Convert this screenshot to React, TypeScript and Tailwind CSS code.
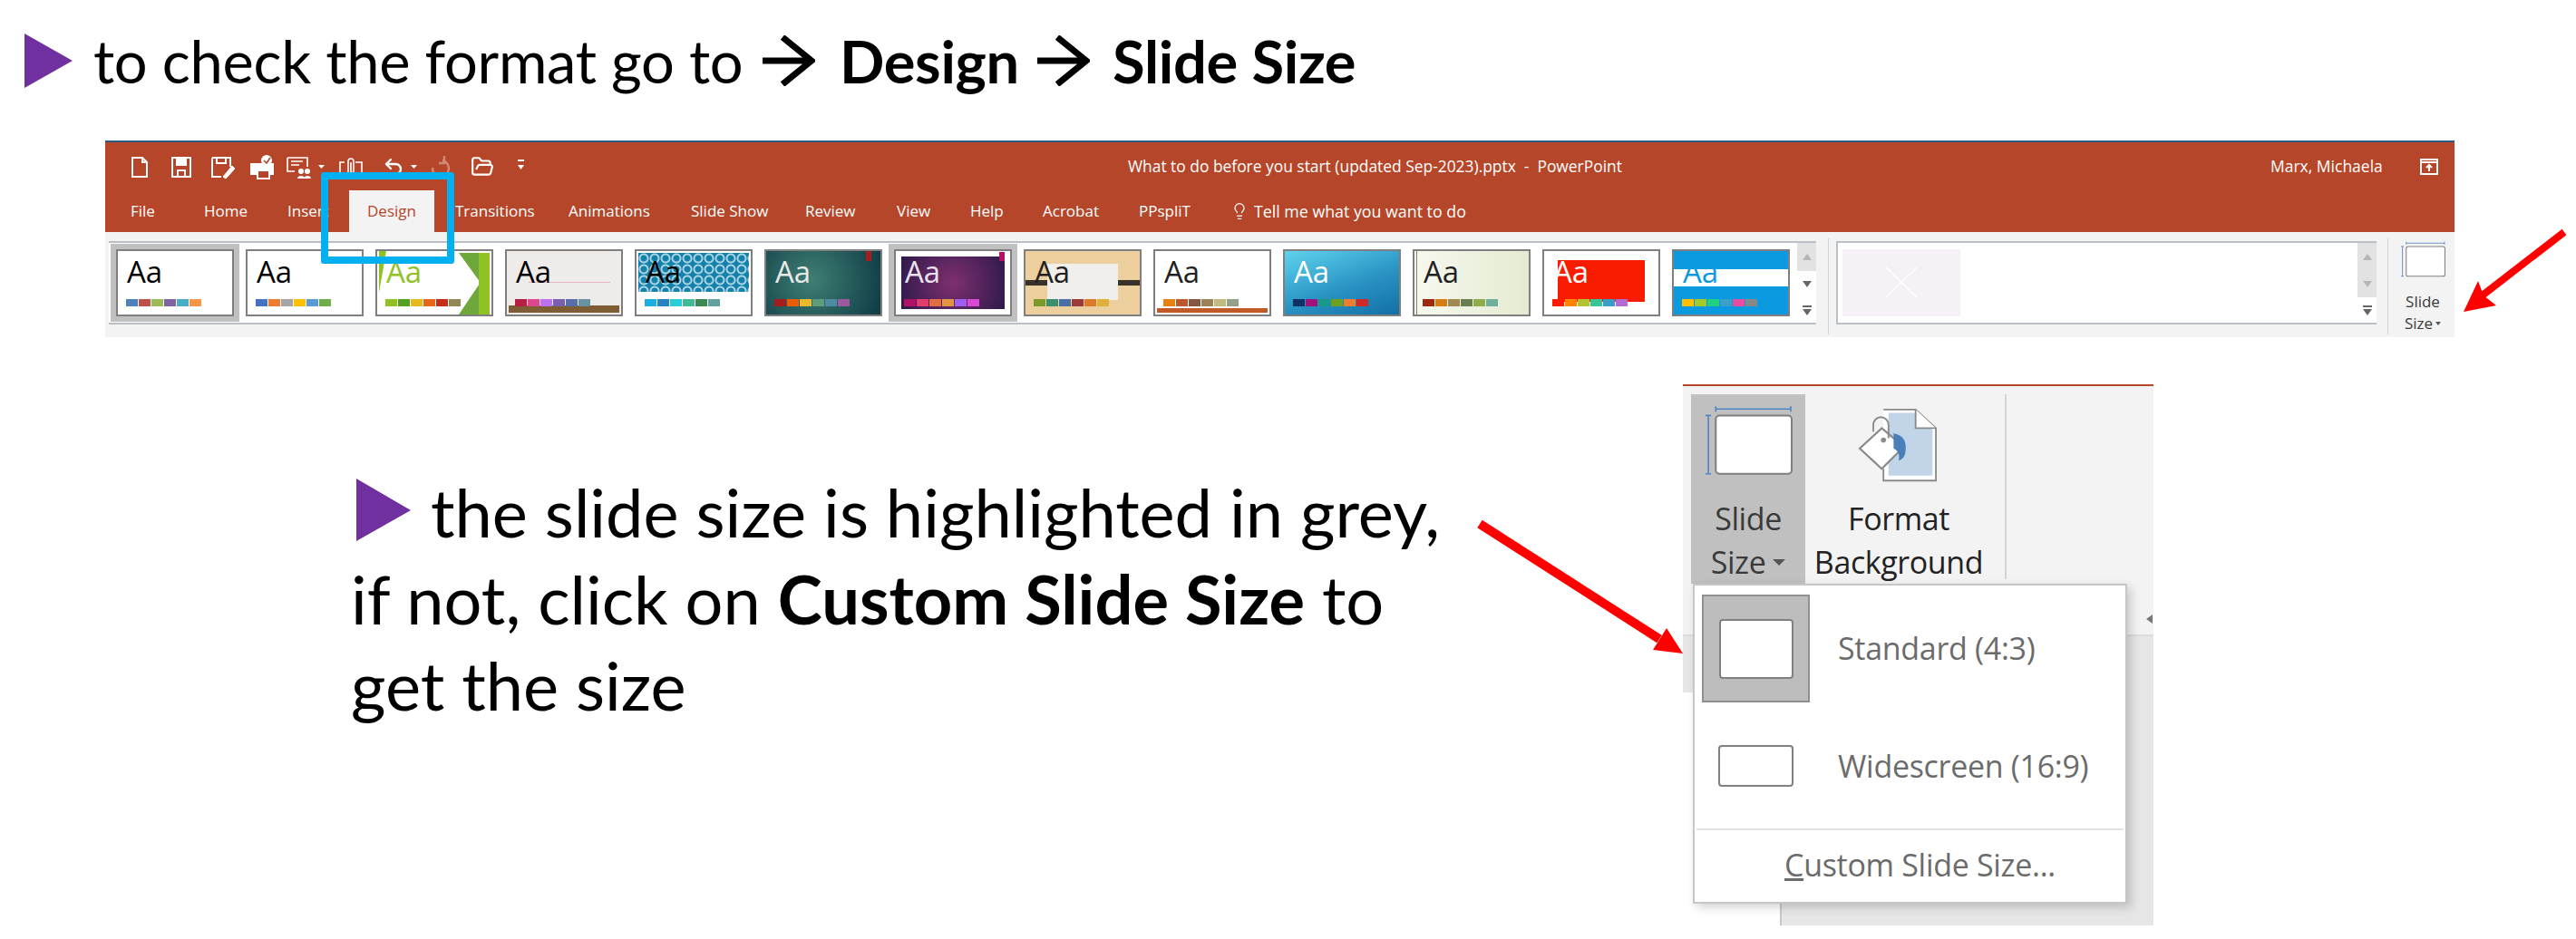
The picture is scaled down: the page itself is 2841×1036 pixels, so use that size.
import React from 'react';
import { FolderOpen, Lightbulb, Undo2 } from 'lucide-react';

type Theme = {
  id: string;
  bg: string;
  text: string;
  aa: string;
  swatches: string[];
  selected?: boolean;
  extra?: React.ReactNode;
};

const themes: Theme[] = [
  { id: 'office', bg: 'bg-white', text: 'text-black', aa: 'Aa', selected: true, swatches: ['#4f81bd', '#c0504d', '#9bbb59', '#8064a2', '#4bacc6', '#f79646'] },
  { id: 'office2', bg: 'bg-white', text: 'text-black', aa: 'Aa', swatches: ['#4472c4', '#ed7d31', '#a5a5a5', '#ffc000', '#5b9bd5', '#70ad47'] },
  {
    id: 'facet', bg: 'bg-white', text: 'text-[#90c226]', aa: 'Aa', swatches: ['#90c226', '#54a021', '#e6b91e', '#e76618', '#c42f1a', '#918655'],
    extra: (
      <>
        <div className="absolute left-[2px] top-0 w-[8px] h-[46px] bg-[#90c226] [clip-path:polygon(0_0,100%_0,0_100%)]" />
        <div className="absolute right-[2px] top-[2px] w-[34px] h-[68px] bg-[#6fa83a] [clip-path:polygon(0_0,100%_0,100%_100%,0_100%,70%_48%)]" />
        <div className="absolute right-[2px] top-[2px] w-[12px] h-[68px] bg-[#90c226]" />
      </>
    ),
  },
  {
    id: 'wood', bg: 'bg-[#efebe9]', text: 'text-black', aa: 'Aa', swatches: ['#b71e42', '#de478e', '#bc72f0', '#795faf', '#586ea6', '#6892a0'],
    extra: (
      <>
        <div className="absolute left-[24px] right-[12px] top-[34px] h-[1px] bg-[#e6b4c4]" />
        <div className="absolute left-[2px] right-[2px] bottom-[2px] h-[8px] bg-[#7e5d34]" />
      </>
    ),
  },
  {
    id: 'pattern', bg: 'bg-white', text: 'text-black', aa: 'Aa', swatches: ['#1cade4', '#2683c6', '#27ced7', '#42ba97', '#3e8853', '#62a39f'],
    extra: <div className="absolute left-[2px] right-[2px] top-[2px] h-[43px] bg-[radial-gradient(circle,#1481ab_3px,#a9d3e3_4px,#a9d3e3_5px,#1481ab_6px)] bg-[length:12px_12px]" />,
  },
  {
    id: 'teal', bg: 'bg-[radial-gradient(circle_at_40%_45%,#3f7f74,#0e3a44)]', text: 'text-[#e8e8e8]', aa: 'Aa', swatches: ['#a61c1c', '#e85d04', '#e8b92e', '#5f9c7e', '#4f8ba0', '#9b59a0'],
    extra: <div className="absolute right-[10px] top-0 w-[6px] h-[11px] bg-[#a81c1c]" />,
  },
  {
    id: 'purple', bg: 'bg-white', text: 'text-[#e8e0ec]', aa: 'Aa', selected: true, swatches: ['#b31166', '#e33d6f', '#e46c42', '#e1963f', '#a15ff0', '#d94bd6'],
    extra: (
      <>
        <div className="absolute left-[6px] right-[6px] top-[6px] bottom-[6px] bg-[radial-gradient(circle_at_50%_50%,#7e2f70,#2e1a4a)]" />
        <div className="absolute right-[6px] top-[1px] w-[6px] h-[10px] bg-[#b31166]" />
      </>
    ),
  },
  {
    id: 'tan', bg: 'bg-[#eccf9c]', text: 'text-[#222222]', aa: 'Aa', swatches: ['#7c9a2a', '#3b8f6c', '#4a6fa5', '#9c3a3a', '#d97b2b', '#e0b13a'],
    extra: (
      <>
        <div className="absolute left-[24px] right-[24px] top-[14px] h-[40px] bg-[#f0efec]" />
        <div className="absolute left-0 w-[24px] top-[32px] h-[6px] bg-[#3a3228]" />
        <div className="absolute right-0 w-[24px] top-[32px] h-[6px] bg-[#3a3228]" />
      </>
    ),
  },
  {
    id: 'retro', bg: 'bg-white', text: 'text-[#222222]', aa: 'Aa', swatches: ['#e48312', '#bd582c', '#865640', '#9b8357', '#c2bc80', '#94a088'],
    extra: <div className="absolute left-[2px] right-[2px] bottom-[2px] h-[5px] bg-[#c05a28]" />,
  },
  {
    id: 'ion', bg: 'bg-[linear-gradient(160deg,#5fd3ee,#2a94c4_55%,#136fa4)]', text: 'text-white', aa: 'Aa', swatches: ['#0f3263', '#a1127f', '#1a9988', '#6e9f1e', '#ed7d31', '#d0282a'],
  },
  {
    id: 'sage', bg: 'bg-[linear-gradient(90deg,#f7f8ee,#e4ebd2)]', text: 'text-[#222222]', aa: 'Aa', swatches: ['#9c2a0e', '#d97c14', '#a08850', '#6b7f4e', '#8fae4a', '#6fb09a'],
    extra: <div className="absolute left-[2px] top-0 bottom-0 w-[1px] bg-[#80846a]" />,
  },
  {
    id: 'red', bg: 'bg-white', text: 'text-white', aa: 'Aa', swatches: ['#ff1a00', '#ff8400', '#b5c22f', '#38c494', '#3a9cc9', '#b46ad0'],
    extra: <div className="absolute left-[15px] right-[15px] top-[10px] bottom-[14px] bg-[#fa1c00]" />,
  },
  {
    id: 'band', bg: 'bg-[#0b9ae0]', text: 'text-[#0b9ae0]', aa: 'Aa', swatches: ['#ffc000', '#a5c82c', '#1fd07e', '#3aa0c8', '#e84ba0', '#888888'],
    extra: <div className="absolute left-0 right-0 top-[20px] h-[19px] bg-white" />,
  },
];

const tabs = [
  { label: 'File', w: 'w-[81px]' },
  { label: 'Home', w: 'w-[92px]' },
  { label: 'Insert', w: 'w-[68px]' },
];
const tabsAfter = [
  { label: 'Transitions', w: 'w-[125px]' },
  { label: 'Animations', w: 'w-[135px]' },
  { label: 'Slide Show', w: 'w-[126px]' },
  { label: 'Review', w: 'w-[101px]' },
  { label: 'View', w: 'w-[81px]' },
  { label: 'Help', w: 'w-[80px]' },
  { label: 'Acrobat', w: 'w-[106px]' },
  { label: 'PPspliT', w: 'w-[101px]' },
];

function ThemeThumb({ theme }: { theme: Theme }) {
  return (
    <div
      className={`relative shrink-0 w-[130px] h-[74px] border-2 border-[#7f7f7f] overflow-hidden ${theme.bg} ${theme.selected ? 'outline-[6px] outline-[#c0c0c0]' : ''}`}
    >
      {theme.extra}
      <span className={`absolute left-[10px] top-[4px] text-[33px] leading-[38px] ${theme.text}`}>{theme.aa}</span>
      <div className="absolute left-[9px] bottom-[9px] flex gap-px">
        {theme.swatches.map((c, i) => (
          <div key={i} className="w-[13px] h-[8px]" style={{ background: c }} />
        ))}
      </div>
    </div>
  );
}

function ScrollCol({ lastEnabled }: { lastEnabled?: boolean }) {
  return (
    <div className="w-[21px] h-full flex flex-col border-y-2 border-[#b9c0c7] bg-white text-[#6a6a6a] text-[10px] shrink-0">
      <div className="h-[31px] bg-[#e2e2e2] flex items-center justify-center">
        <div className="w-0 h-0 border-x-[5px] border-x-transparent border-b-[7px] border-b-[#b5b5b5]" />
      </div>
      <div className={`h-[29px] flex items-center justify-center ${lastEnabled ? 'bg-white' : 'bg-[#e2e2e2]'}`}>
        <div className={`w-0 h-0 border-x-[5px] border-x-transparent border-t-[7px] ${lastEnabled ? 'border-t-[#666666]' : 'border-t-[#b5b5b5]'}`} />
      </div>
      <div className="flex-1 flex flex-col items-center justify-center gap-[2px]">
        <div className="w-[10px] h-[2px] bg-[#666666]" />
        <div className="w-0 h-0 border-x-[5px] border-x-transparent border-t-[7px] border-t-[#666666]" />
      </div>
    </div>
  );
}

function SlideSizeGlyph({ className }: { className?: string }) {
  // blue dimension lines with the rounded slide rectangle
  return (
    <svg viewBox="0 0 96 76" className={className} fill="none">
      <path d="M13 4H94M13 1V7M94 1V7" stroke="#4f86c6" strokeWidth="1.6" />
      <path d="M5 11V74M2 11H8M2 74H8" stroke="#4f86c6" strokeWidth="1.6" />
      <rect x="13" y="11" width="82" height="63" rx="4" fill="#ffffff" stroke="#7f7f7f" strokeWidth="2" />
    </svg>
  );
}

function Qat() {
  return (
    <svg width="450" height="32" viewBox="0 0 450 32" fill="none" stroke="#ffffff" strokeWidth="2">
      {/* new */}
      <path d="M12 6H23L28 11V27H12Z M23 6V11H28" />
      {/* save */}
      <path d="M56 6H76V27H56Z" />
      <path d="M61 6V14H71V6" fill="#ffffff" />
      <rect x="62" y="20" width="8" height="7" fill="#b5452a" stroke="#ffffff" />
      {/* save as */}
      <path d="M100 6H120V16M100 6V27H110M105 6V12H115V6" />
      <path d="M112 27L122 15L125 18L115 29Z" fill="#ffffff" strokeWidth="1" />
      {/* print */}
      <path d="M143 13H167V24H143Z" fill="#ffffff" />
      <rect x="150" y="20" width="13" height="9" fill="#b5452a" />
      <circle cx="160" cy="9" r="6" fill="#ffffff" stroke="none" />
      <path d="M157 9L160 12L164 6" stroke="#b5452a" strokeWidth="1.6" />
      {/* review */}
      <path d="M183 6H205V16M183 6V21H191M187 10H200M187 14H196" strokeWidth="1.6" />
      <circle cx="198" cy="21" r="3" fill="#ffffff" stroke="none" />
      <circle cx="205" cy="21" r="3" fill="#ffffff" stroke="none" />
      <path d="M194 29C194 25 202 25 202 29ZM201 29C201 25 209 25 209 29Z" fill="#ffffff" stroke="none" />
      <path d="M217 14H224L220.5 18Z" fill="#ffffff" stroke="none" />
      {/* attach */}
      <path d="M241 26V11H246M258 11H265V26H241" strokeWidth="1.6" />
      <path d="M250 22V10A3 3 0 0 1 256 10V21A1.5 1.5 0 0 1 253 21V11" strokeWidth="1.6" />
      {/* undo caret */}
      <path d="M319 14H326L322.5 18Z" fill="#ffffff" stroke="none" />
      {/* customize */}
      <path d="M437 9H444" />
      <path d="M437 14H444L440.5 19Z" fill="#ffffff" stroke="none" />
      {/* redo, disabled */}
      <path d="M343 17A9 9 0 1 0 354 9M356 4V12H350" stroke="#d08a77" strokeWidth="2.4" />
    </svg>
  );
}

function HeadingArrow({ className }: { className?: string }) {
  return (
    <svg width="60" height="56" viewBox="0 0 60 56" fill="none" stroke="#000000" strokeWidth="7" className={className}>
      <path d="M2 28H56M24 2L56 28L24 54" />
    </svg>
  );
}

export default function App() {
  return (
    <div className="relative w-[2841px] h-[1036px] bg-white overflow-hidden text-black font-['Lato','Liberation_Sans',sans-serif]">
      {/* heading */}
      <div className="h-[155px] flex items-start pl-[27px] pt-[37px]">
        <svg width="53" height="60" viewBox="0 0 53 60" className="shrink-0">
          <polygon points="0,0 53,30 0,60" fill="#7030a0" />
        </svg>
        <h1 className="ml-[23px] -mt-[16px] flex items-center text-[65px] leading-[92px] font-normal tracking-[-0.3px] whitespace-nowrap">
          <span className="w-[736px] shrink-0">to check the format go to</span>
          <HeadingArrow className="shrink-0 mr-[27px]" />
          <b className="w-[192px] shrink-0 font-bold">Design</b>
          <HeadingArrow className="shrink-0 ml-[24px] mr-[25px]" />
          <b className="font-bold">Slide Size</b>
        </h1>
      </div>

      {/* ribbon screenshot */}
      <div className="relative ml-[116px] w-[2591px] font-['Open_Sans','Liberation_Sans',sans-serif]">
        <div className="h-[2px] bg-[#2b5a84]" />
        <div className="bg-[#b54629] text-white">
          <div className="h-[53px] flex items-center text-[17.4px]">
            <div className="relative w-[1128px] h-full shrink-0 pl-[18px] pt-[11px]">
              <Qat />
              <Undo2 className="absolute left-[306px] top-[15px] w-[24px] h-[24px]" strokeWidth={2.4} />
              <FolderOpen className="absolute left-[403px] top-[14px] w-[26px] h-[26px]" strokeWidth={2} />
            </div>
            <span className="w-[1260px] shrink-0 whitespace-pre">What to do before you start (updated Sep-2023).pptx  -  PowerPoint</span>
            <span className="w-[164px] shrink-0 text-[17.5px]">Marx, Michaela</span>
            <svg width="22" height="20" viewBox="0 0 22 20" fill="none" stroke="#ffffff" strokeWidth="2" className="shrink-0">
              <path d="M2 2H20V18H2ZM2 5H20M11 15V8M8 11L11 8L14 11" />
            </svg>
          </div>
          <div className="h-[46px] flex items-center text-[17px] pl-[28px]">
            {tabs.map((t) => (
              <span key={t.label} className={`${t.w} shrink-0`}>{t.label}</span>
            ))}
            <div className="w-[94px] h-full shrink-0 bg-[#f3f3f3] text-[#b54629] flex items-center justify-center">Design</div>
            <div className="w-[23px] shrink-0" />
            {tabsAfter.map((t) => (
              <span key={t.label} className={`${t.w} shrink-0`}>{t.label}</span>
            ))}
            <Lightbulb className="w-[20px] h-[26px] shrink-0" strokeWidth={1.5} />
            <span className="ml-[6px] text-[17.8px]">Tell me what you want to do</span>
          </div>
        </div>

        <div className="h-[116px] bg-[#f3f3f3] flex items-start pt-[10px] pl-[4px]">
          <div className="h-[92px] w-[1862px] shrink-0 bg-white border-y-2 border-[#b9c0c7] flex gap-[13px] pl-[8px] pt-[7px] overflow-visible">
            {themes.map((t) => (
              <ThemeThumb key={t.id} theme={t} />
            ))}
          </div>
          <div className="h-[92px] shrink-0">
            <ScrollCol lastEnabled />
          </div>
          <div className="w-px h-[106px] -mt-[3px] ml-[13px] mr-[8px] bg-[#d4d4d4] shrink-0" />
          <div className="h-[92px] w-[575px] shrink-0 bg-white border-y-2 border-l-2 border-[#b9c0c7] pl-[5px] pt-[7px]">
            <div className="w-[130px] h-[74px] bg-[#f5f1f7]">
              <svg viewBox="0 0 130 74" className="w-full h-full" fill="none" stroke="#ffffff" strokeWidth="1.5">
                <path d="M48 20L82 53M82 20L48 53" />
              </svg>
            </div>
          </div>
          <div className="h-[92px] shrink-0">
            <ScrollCol />
          </div>
          <div className="w-px h-[106px] -mt-[3px] ml-[12px] bg-[#d4d4d4] shrink-0" />
          <div className="ml-[13px] w-[50px] flex flex-col items-center text-[#3a3a3a] text-[17px] leading-[24px]">
            <SlideSizeGlyph className="w-[50px] h-[40px] shrink-0" />
            <span className="mt-[15px]">Slide</span>
            <span className="flex items-center gap-[3px]">
              Size
              <span className="w-0 h-0 border-x-[3px] border-x-transparent border-t-[4px] border-t-[#555555]" />
            </span>
          </div>
        </div>

        {/* blue highlight around the Design tab */}
        <div className="absolute left-[238px] top-[35px] w-[147px] h-[101px] border-[8px] border-[#00b0f0] rounded-[3px]" />
      </div>

      {/* lower part */}
      <div className="flex mt-[52px]">
        <div className="w-[1856px] shrink-0 pl-[387px] pt-[93px] text-[74px] leading-[95.5px] whitespace-nowrap">
          <svg width="60" height="69" viewBox="0 0 60 69" className="inline-block align-[-4px] ml-[6px] mr-[22px]">
            <polygon points="0,0 60,35 0,69" fill="#7030a0" />
          </svg>
          the slide size is highlighted in grey,
          <br />
          if not, click on <b className="font-bold">Custom Slide Size</b> to
          <br />
          get the size
        </div>

        <div className="relative w-[519px] h-[597px] shrink-0 font-['Open_Sans','Liberation_Sans',sans-serif]">
          <div className="h-[2px] bg-[#b54629]" />
          <div className="h-[276px] bg-[#f3f3f3] border-b-2 border-[#dcdcdc] pt-[9px] flex">
            <div className="ml-[9px] w-[126px] h-[209px] bg-[#c0c0c0] flex flex-col items-center text-[34px] leading-[48px] text-[#3a3a3a] tracking-[-0.4px]">
              <SlideSizeGlyph className="w-[98px] h-[80px] mt-[11px] mb-[22px] shrink-0" />
              <span>Slide</span>
              <span className="flex items-center gap-[8px]">
                Size
                <span className="w-0 h-0 border-x-[7px] border-x-transparent border-t-[7px] border-t-[#555555]" />
              </span>
            </div>
            <div className="w-[206px] flex flex-col items-center text-[34px] leading-[48px] text-[#222222] tracking-[-0.4px]">
              <svg width="90" height="84" viewBox="0 0 96 90" className="mt-[15px] mb-[14px] shrink-0" fill="none">
                <path d="M30 2H68L92 24V86H30V72" fill="#ffffff" stroke="#8a8a8a" strokeWidth="2" />
                <path d="M36 6H66L88 26V80H36Z" fill="#c1d4e8" />
                <path d="M68 2V24H92" fill="#ffffff" stroke="#8a8a8a" strokeWidth="2" />
                <path d="M2 48L28 24L54 46L28 72Z" fill="#ffffff" stroke="#8a8a8a" strokeWidth="2.4" />
                <path d="M18 28V20A9 9 0 0 1 36 20V36" stroke="#8a8a8a" strokeWidth="2" />
                <circle cx="30" cy="38" r="3" fill="#8a8a8a" />
                <path d="M42 30C52 32 58 38 56 52C55 60 50 62 48 62C50 54 46 50 42 48Z" fill="#4a80ba" />
              </svg>
              <span>Format</span>
              <span>Background</span>
            </div>
            <div className="ml-[14px] w-[2px] h-[204px] bg-[#d4d4d4]" />
          </div>
          <div className="h-[62px] bg-[#e6e6e6]" />
          <div className="flex h-[257px]">
            <div className="w-[109px] bg-white border-r-2 border-[#c8c8c8]" />
            <div className="flex-1 bg-[#e6e6e6]" />
          </div>
          <div className="absolute right-[1px] top-[254px] w-0 h-0 border-y-[5px] border-y-transparent border-r-[7px] border-r-[#777777]" />

          {/* dropdown menu */}
          <div className="absolute left-[11px] top-[220px] w-[479px] h-[353px] bg-white border-2 border-[#c6c6c6] shadow-[4px_4px_10px_rgba(0,0,0,0.18)] text-[34px] text-[#6b6b6b] tracking-[-0.3px] flex flex-col">
            <div className="flex items-center h-[130px] pt-[9px] pl-[8px]">
              <div className="w-[119px] h-[119px] bg-[#bdbdbd] border-2 border-[#8f8f8f] flex items-center justify-center shrink-0">
                <div className="w-[82px] h-[66px] bg-white border-2 border-[#808080] rounded-[4px]" />
              </div>
              <span className="ml-[31px]">Standard (4:3)</span>
            </div>
            <div className="flex items-center h-[130px] pl-[26px] pt-[8px]">
              <div className="w-[83px] h-[46px] bg-white border-2 border-[#808080] rounded-[4px] shrink-0" />
              <span className="ml-[49px]">Widescreen (16:9)</span>
            </div>
            <div className="mx-[2px] h-[2px] bg-[#e2e2e2] mt-[8px] shrink-0" />
            <div className="flex-1 flex items-center pl-[99px] pb-[2px]">
              <span><u>C</u>ustom Slide Size...</span>
            </div>
          </div>
        </div>
      </div>

      {/* red arrows */}
      <svg className="absolute left-0 top-0 pointer-events-none" width="2841" height="1036" viewBox="0 0 2841 1036">
        <path d="M1632 578L1830 705" stroke="#ff0000" strokeWidth="10" />
        <polygon points="1856,721 1838,693 1823,717" fill="#ff0000" />
        <path d="M2828 256L2726 335" stroke="#ff0000" strokeWidth="8" />
        <polygon points="2717,344 2733,310 2739,326 2753,337" fill="#ff0000" />
      </svg>
    </div>
  );
}
